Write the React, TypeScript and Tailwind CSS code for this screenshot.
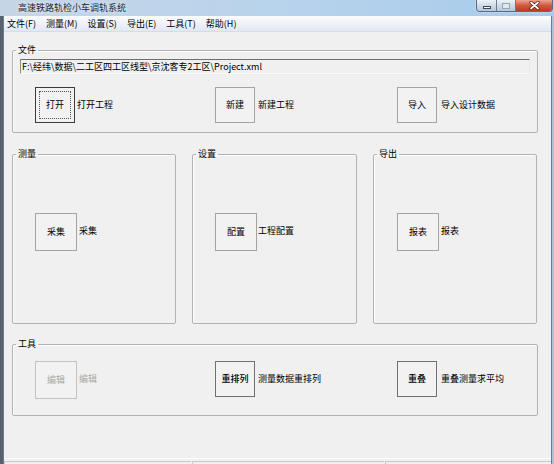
import React from 'react';

const font = "font-['Noto_Sans_CJK_SC','Liberation_Sans',sans-serif]";

type GroupProps = {
  title: string;
  className?: string;
  children?: React.ReactNode;
};

function Group({ title, className = '', children }: GroupProps) {
  return (
    <fieldset className={`min-w-0 border border-[#b2b2b2] rounded-[2px] shadow-[inset_1px_1px_0_#ffffff] ${className}`}>
      <legend className="ml-[3px] px-[2px] text-[9px] leading-[12px] text-black">{title}</legend>
      {children}
    </fieldset>
  );
}

type ActionProps = {
  button: string;
  label: string;
  size?: 'sm' | 'lg';
  focused?: boolean;
  disabled?: boolean;
  strong?: boolean;
  gap?: string;
};

function Action({ button, label, size = 'sm', focused, disabled, strong, gap = 'ml-[3px]' }: ActionProps) {
  const dims = size === 'lg' ? 'w-[42px] h-[38px]' : 'w-[40px] h-[36px]';
  const border = focused
    ? 'border-[#3c3c3c]'
    : disabled
      ? 'border-[#c2c2c2]'
      : strong
        ? 'border-[#707070]'
        : 'border-[#a3a3a3]';
  const text = disabled ? 'text-[#a8a8a8]' : 'text-black';
  return (
    <div className="flex items-center">
      <div className={`${dims} shrink-0 border ${border} bg-[#f2f2f2] p-[3px]`}>
        <div
          className={`h-full flex items-center justify-center text-[9px] leading-[12px] ${text} ${strong ? 'font-medium' : ''} ${
            focused ? 'border border-dotted border-[#555555]' : ''
          }`}
        >
          {button}
        </div>
      </div>
      <span className={`${gap} text-[9px] leading-[12px] ${text}`}>{label}</span>
    </div>
  );
}

function CaptionButtons() {
  return (
    <div className="flex h-[12px] mr-[1px] rounded-b-[4px] border border-t-0 border-[#5b6a7c] overflow-hidden shadow-[0_0_2px_rgba(255,255,255,0.7)]">
      <div className="w-[20px] flex items-end justify-center pb-[2px] bg-linear-to-b from-[#eef3f8] via-[#cfdbe8] to-[#b7c8da] border-r border-[#6d7c8c]">
        <div className="w-[8px] h-[3px] bg-white border border-[#3b4a5a]" />
      </div>
      <div className="w-[19px] flex items-center justify-center bg-linear-to-b from-[#eef3f8] via-[#cfdbe8] to-[#b7c8da] border-r border-[#6d7c8c]">
        <div className="w-[8px] h-[6px] border border-[#9aa8b6] bg-[#dfe7ef]" />
      </div>
      <div className="w-[36px] flex items-center justify-center bg-linear-to-b from-[#eaa494] via-[#d0573f] to-[#c13a20]">
        <svg width="11" height="9" viewBox="0 0 11 9">
          <path d="M2 1.5 L9 7.5 M9 1.5 L2 7.5" stroke="#4a1a10" strokeWidth="3.2" strokeLinecap="round" />
          <path d="M2 1.5 L9 7.5 M9 1.5 L2 7.5" stroke="#ffffff" strokeWidth="1.8" strokeLinecap="round" />
        </svg>
      </div>
    </div>
  );
}

const menus = ['文件(F)', '测量(M)', '设置(S)', '导出(E)', '工具(T)', '帮助(H)'];

export default function App() {
  return (
    <div className={`w-[554px] h-[464px] overflow-hidden flex flex-col ${font} bg-linear-to-r from-[#c6d5e5] via-[#b8d3ec] to-[#a7cbeb]`}>
      {/* title bar */}
      <div className="h-[16px] shrink-0 flex items-start justify-between">
        <span className="pl-[18px] pt-[1px] text-[9px] leading-[13px] text-[#1c2430] [text-shadow:0_0_4px_#ffffff]">
          高速铁路轨检小车调轨系统
        </span>
        <CaptionButtons />
      </div>

      <div className="flex-1 flex min-h-0">
        <div className="w-[3px] shrink-0 bg-[#56636f]" />

        <div className="flex-1 flex flex-col min-w-0 border-x border-[#6c7c8a]">
          {/* menu bar */}
          <div className="h-[16px] shrink-0 flex items-center gap-[10px] pl-[3px] bg-linear-to-b from-[#fbfcfe] to-[#e1e7f3] border-b border-[#d7dde8] text-[9px] leading-[12px] text-black">
            {menus.map(m => (
              <span key={m}>{m}</span>
            ))}
          </div>

          {/* client area */}
          <div className="flex-1 flex flex-col bg-[#f0f0f0] pt-[12px] pl-[8px] pr-[13px]">
            <Group title="文件" className="h-[89px]">
              <div className="mx-[7px] mt-[3px] h-[15px] border border-t-[#6e6e6e] border-l-[#8a8a8a] border-b-[#fafafa] border-r-[#e8e8e8] bg-[#f0f0f0] flex items-center pl-[1px] text-[9px] leading-[12px] text-black whitespace-nowrap overflow-hidden">
                F:\经纬\数据\二工区四工区线型\京沈客专2工区\Project.xml
              </div>
              <div className="flex mt-[13px] pl-[22px]">
                <div className="w-[180px]">
                  <Action button="打开" label="打开工程" focused gap="ml-[2px]" />
                </div>
                <div className="w-[182px]">
                  <Action button="新建" label="新建工程" />
                </div>
                <div>
                  <Action button="导入" label="导入设计数据" gap="ml-[4px]" />
                </div>
              </div>
            </Group>

            <div className="flex gap-[16px] mt-[15px]">
              <Group title="测量" className="w-[164px] h-[176px]">
                <div className="pt-[53px] pl-[22px]">
                  <Action button="采集" label="采集" size="lg" gap="ml-[2px] -mt-[3px]" />
                </div>
              </Group>
              <Group title="设置" className="w-[165px] h-[176px]">
                <div className="pt-[53px] pl-[22px]">
                  <Action button="配置" label="工程配置" size="lg" gap="ml-[1px] -mt-[3px]" />
                </div>
              </Group>
              <Group title="导出" className="w-[164px] h-[176px]">
                <div className="pt-[53px] pl-[23px]">
                  <Action button="报表" label="报表" size="lg" gap="ml-[2px] -mt-[3px]" />
                </div>
              </Group>
            </div>

            <Group title="工具" className="h-[78px] mt-[14px]">
              <div className="flex pt-[11px] pl-[22px]">
                <div className="w-[180px]">
                  <Action button="编辑" label="编辑" size="lg" disabled gap="ml-[2px] -mt-[2px]" />
                </div>
                <div className="w-[182px]">
                  <Action button="重排列" label="测量数据重排列" strong />
                </div>
                <div>
                  <Action button="重叠" label="重叠测量求平均" strong gap="ml-[4px]" />
                </div>
              </div>
            </Group>
          </div>

          {/* status bar */}
          <div className="h-[6px] shrink-0 bg-[#f0f0f0] border-t border-white flex pt-[2px]">
            <div className="w-[187px] border-t border-l border-[#c9c9c9]" />
            <div className="w-[192px] ml-[1px] border-t border-l border-[#c9c9c9]" />
            <div className="flex-1 ml-[1px] border-t border-l border-[#c9c9c9]" />
          </div>
        </div>

        <div className="w-[2px] shrink-0 bg-[#a9c3da]" />
      </div>
    </div>
  );
}
